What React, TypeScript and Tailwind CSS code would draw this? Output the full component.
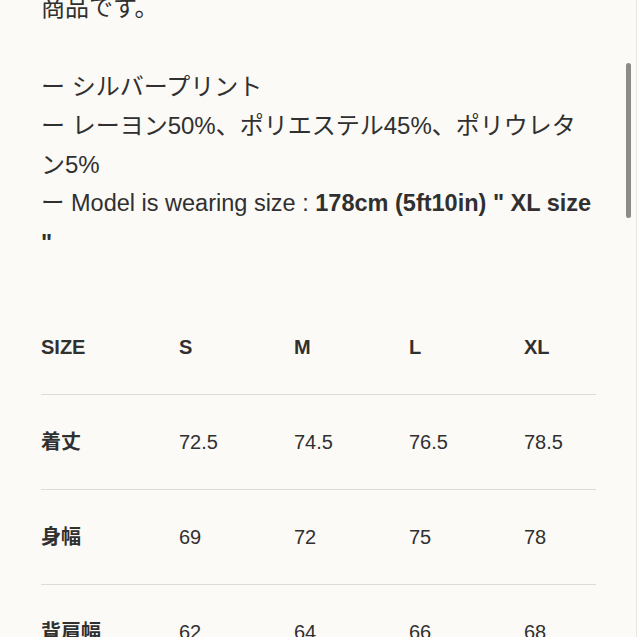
import React from "react";

const gridCls = "grid grid-cols-[138px_115px_115px_115px_1fr] h-[95px] items-center border-b border-[#dcdbd7]";

const rows: { label: string; vals: string[] }[] = [
  { label: "着丈", vals: ["72.5", "74.5", "76.5", "78.5"] },
  { label: "身幅", vals: ["69", "72", "75", "78"] },
  { label: "背肩幅", vals: ["62", "64", "66", "68"] },
];

export default function App() {
  return (
    <div
      className="relative h-[637px] w-[637px] overflow-hidden bg-[#fbfaf6] text-[#303030]"
      style={{ fontFamily: '"Liberation Sans", "Noto Sans CJK JP", sans-serif' }}
    >
      <div className="-mt-[12px] px-[41px]">
        <div className="text-[24px] leading-[39.25px]">
          <p>商品です。</p>
          <p>&nbsp;</p>
          <p>ー シルバープリント</p>
          <p>ー レーヨン50%、ポリエステル45%、ポリウレタン5%</p>
          <p className="text-[23.5px]">
            ー Model is wearing size : <span className="font-bold">178cm (5ft10in) " XL size "</span>
          </p>
        </div>
        <div className="mt-[37px] text-[20px]">
          <div className={`${gridCls} font-bold`}>
            <div>SIZE</div>
            <div>S</div>
            <div>M</div>
            <div>L</div>
            <div>XL</div>
          </div>
          {rows.map((r) => (
            <div key={r.label} className={gridCls}>
              <div className="font-bold">{r.label}</div>
              {r.vals.map((v, i) => (
                <div key={i}>{v}</div>
              ))}
            </div>
          ))}
        </div>
      </div>
      <div className="absolute left-[626px] top-[63px] h-[155px] w-[5px] rounded-full bg-[#8b8b87]" />
      <div className="absolute right-0 top-0 h-full w-px bg-[#e6e5e1]" />
    </div>
  );
}
